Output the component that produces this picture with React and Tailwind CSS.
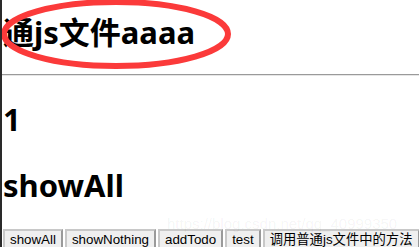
import React from "react";

function Btn({ children }) {
  return (
    <button className="h-[21px] shrink-0 border-2 border-[#9a9a9a] border-t-[#c8c8c8] border-l-[#c8c8c8] bg-[#efefef] px-[5px] font-['Liberation_Sans','Noto_Sans_CJK_SC',sans-serif] text-[13.33px] leading-[15px] text-black">
      {children}
    </button>
  );
}

export default function App() {
  return (
    <div className="relative h-[247px] w-[419px] overflow-hidden border-l-2 border-[#2a2a2a] bg-white font-['Noto_Sans','Noto_Sans_CJK_SC',sans-serif]">
      <div className="mt-[12px] pl-[1px] text-[31px] font-bold leading-[40px] text-black">
        通js文件aaaa
      </div>
      <div className="mt-[22px] h-[2px] border-t border-b border-t-[#9a9a9a] border-b-[#e6e6e6]" />
      <div className="mt-[23px] pl-[1px] text-[31px] font-bold leading-[40px] text-black">
        1
      </div>
      <div className="mt-[26px] pl-[1px] text-[31px] font-bold leading-[40px] text-black">
        showAll
      </div>
      <div className="relative mt-[24px] flex gap-[2px] pl-[1px]">
        <Btn>showAll</Btn>
        <Btn>showNothing</Btn>
        <Btn>addTodo</Btn>
        <Btn>test</Btn>
        <Btn>调用普通js文件中的方法</Btn>
      </div>
      <div className="pointer-events-none absolute left-[165px] top-[213px] font-['Liberation_Sans',sans-serif] text-[15px] text-[#000]/[0.05]">
        https://blog.csdn.net/qq_40999350
      </div>
      <svg
        className="pointer-events-none absolute left-[-2px] top-0"
        width="419"
        height="90"
        viewBox="0 0 419 90"
      >
        <ellipse
          cx="116"
          cy="34"
          rx="112"
          ry="32"
          fill="none"
          stroke="#fb3a3a"
          strokeWidth="6"
        />
      </svg>
    </div>
  );
}
